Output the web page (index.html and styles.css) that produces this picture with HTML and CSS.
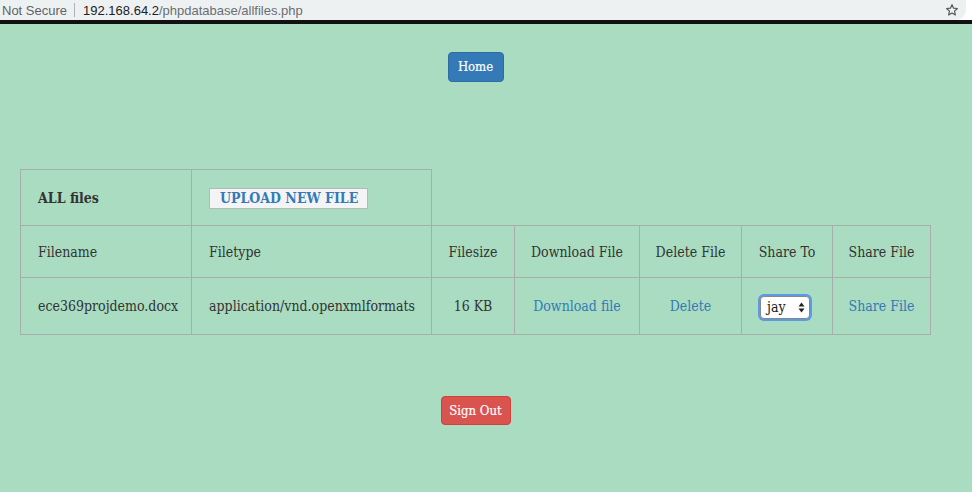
FILE: index.html
```html
<!DOCTYPE html>
<html>
<head>
<meta charset="utf-8">
<link rel="stylesheet" href="styles.css">
</head>
<body>
<div class="chrome">
  <div class="urlbar">
    <span class="insecure">Not Secure</span>
    <span class="sep"></span>
    <span class="host">192.168.64.2</span><span class="path">/phpdatabase/allfiles.php</span>
    <svg class="star" width="14" height="14" viewBox="0 0 24 24"><path d="M12 2.8l2.7 6.1 6.6.6-5 4.4 1.5 6.5L12 17l-5.8 3.4 1.5-6.5-5-4.4 6.6-.6z" fill="none" stroke="#555" stroke-width="2" stroke-linejoin="round"/></svg>
  </div>
  <div class="blackband"></div>
</div>
<main class="page">
  <div class="top"><a class="btn btn-home">Home</a></div>
  <table class="files">
    <tr class="r1">
      <th class="c1">ALL files</th>
      <td class="c2"><span class="upload">UPLOAD NEW FILE</span></td>
    </tr>
    <tr class="r2">
      <td>Filename</td>
      <td>Filetype</td>
      <td class="center">Filesize</td>
      <td class="center">Download File</td>
      <td class="center">Delete File</td>
      <td class="center">Share To</td>
      <td class="center">Share File</td>
    </tr>
    <tr class="r3">
      <td>ece369projdemo.docx</td>
      <td>application/vnd.openxmlformats</td>
      <td class="center">16 KB</td>
      <td class="center"><a class="link">Download file</a></td>
      <td class="center"><a class="link">Delete</a></td>
      <td class="center"><span class="select">jay<svg width="7" height="11" viewBox="0 0 7 11"><path d="M3.5 0.5L6.5 4.5H0.5Z M3.5 10.5L6.5 6.5H0.5Z" fill="#222"/></svg></span></td>
      <td class="center"><a class="link">Share File</a></td>
    </tr>
  </table>
  <div class="bottom"><a class="btn btn-out">Sign Out</a></div>
</main>
</body>
</html>
```
FILE: styles.css
```css
html, body { margin: 0; padding: 0; }
body {
  background: #a9dcc1;
  width: 972px;
  height: 492px;
  overflow: hidden;
  font-family: "DejaVu Serif Condensed", "DejaVu Serif", Georgia, serif;
  font-stretch: condensed;
  color: #333;
}
.chrome { background: #fff; }
.urlbar {
  height: 20px;
  background: #eef1f2;
  border-bottom-right-radius: 10px;
  margin-right: 6px;
  display: flex;
  align-items: center;
  font-family: "Liberation Sans", Arial, sans-serif;
  font-stretch: normal;
  font-size: 13px;
  padding-left: 2px;
  position: relative;
}
.insecure { color: #5f6368; }
.sep { width: 1px; height: 14px; background: #b0b3b6; margin: 0 8px 0 7px; }
.host { color: #202124; }
.path { color: #6a6e72; }
.star { position: absolute; right: 7px; top: 3px; }
.blackband { height: 4px; background: #111; }
.page { padding-top: 28px; }
.top, .bottom { display: flex; justify-content: center; padding-right: 21px; }
.btn {
  display: inline-block;
  color: #fff;
  border-radius: 4px;
  font-size: 13px;
  text-align: center;
  -webkit-text-stroke: 0.2px #fff;
}
.btn-home {
  background: #337ab7;
  border: 1px solid #2e6da4;
  width: 54px;
  height: 28px;
  line-height: 28px;
}
.btn-out {
  background: #d9534f;
  border: 1px solid #d43f3a;
  width: 68px;
  height: 27px;
  line-height: 27px;
}
.files {
  border-collapse: collapse;
  margin: 87px 0 0 20px;
  font-size: 14px;
  table-layout: fixed;
}
.files td, .files th {
  border: 1px solid #a6aeab;
  padding: 0 0 0 17px;
  text-align: left;
  font-weight: normal;
  white-space: nowrap;
}
.files .center { text-align: center; padding: 0; }
.files th.c1 { font-weight: bold; width: 153px; }
.files td.c2 { width: 222px; }
.r1 { height: 56px; }
.r2 { height: 52px; }
.r3 { height: 57px; }
.r2 td:nth-child(3) { width: 82px; }
.r2 td:nth-child(4) { width: 124px; }
.r2 td:nth-child(5) { width: 101px; }
.r2 td:nth-child(6) { width: 90px; }
.r2 td:nth-child(7) { width: 97px; }
.upload {
  display: inline-block;
  background: #f4f4f4;
  border: 1px solid #b8b8b8;
  color: #337ab7;
  font-weight: bold;
  font-size: 14px;
  padding: 0 9px 0 10px;
  height: 19px;
  line-height: 19px;
  margin-top: 1px;
}
.link { color: #337ab7; }
.select {
  display: inline-flex;
  align-items: center;
  justify-content: space-between;
  box-sizing: border-box;
  width: 50px;
  height: 23px;
  padding: 0 4px 0 6px;
  background: #fff;
  border: 1px solid #888;
  border-radius: 4px;
  box-shadow: 0 0 0 2px #5b9be6;
  font-size: 14px;
  color: #222;
  margin-right: 4px;
  margin-top: 2px;
}
.bottom { margin-top: 61px; }
```
